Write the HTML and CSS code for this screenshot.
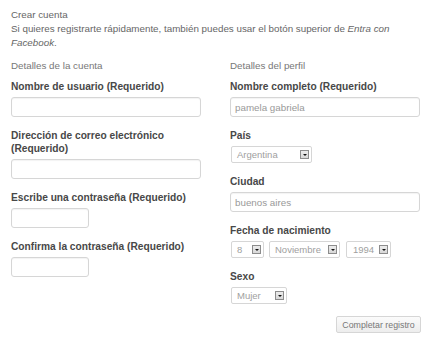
FILE: index.html
```html
<!DOCTYPE html>
<html lang="es">
<head>
<meta charset="utf-8"/>
<title>Crear cuenta</title>
<link rel="stylesheet" href="styles.css">
</head>
<body>
  <div class="intro">
    <p>Crear cuenta</p>
    <p>Si quieres registrarte rápidamente, también puedes usar el botón superior de <em>Entra con</em> <em>Facebook</em>.</p>
  </div>
  <form class="register">
    <div class="column">
      <h4>Detalles de la cuenta</h4>
      <div class="field">
        <label>Nombre de usuario (Requerido)</label>
        <input type="text" class="wide">
      </div>
      <div class="field">
        <label>Dirección de correo electrónico<br>(Requerido)</label>
        <input type="text" class="wide">
      </div>
      <div class="field">
        <label>Escribe una contraseña (Requerido)</label>
        <input type="password" class="short">
      </div>
      <div class="field">
        <label>Confirma la contraseña (Requerido)</label>
        <input type="password" class="short">
      </div>
    </div>
    <div class="column">
      <h4>Detalles del perfil</h4>
      <div class="field">
        <label>Nombre completo (Requerido)</label>
        <input type="text" class="wide" value="pamela gabriela">
      </div>
      <div class="field">
        <label>País</label>
        <div class="select country"><span>Argentina</span><i class="arrow"></i></div>
      </div>
      <div class="field">
        <label>Ciudad</label>
        <input type="text" class="wide" value="buenos aires">
      </div>
      <div class="field">
        <label>Fecha de nacimiento</label>
        <div class="date">
          <div class="select day"><span>8</span><i class="arrow"></i></div>
          <div class="select month"><span>Noviembre</span><i class="arrow"></i></div>
          <div class="select year"><span>1994</span><i class="arrow"></i></div>
        </div>
      </div>
      <div class="field">
        <label>Sexo</label>
        <div class="select sex"><span>Mujer</span><i class="arrow"></i></div>
      </div>
      <div class="actions">
        <button type="button">Completar registro</button>
      </div>
    </div>
  </form>
</body>
</html>
```

FILE: styles.css
```css
body {
  margin: 0;
  padding: 8px 11px 0;
  background: #fff;
  font-family: "Liberation Sans", Arial, sans-serif;
  font-size: 9.8px;
  line-height: 14px;
  color: #666;
}
.intro p {
  margin: 0;
}
.register {
  display: grid;
  grid-template-columns: 190px 190px;
  column-gap: 29px;
  margin-top: 9px;
}
h4 {
  margin: 0 0 7px;
  font-weight: normal;
  color: #777;
}
.field {
  margin-bottom: 12px;
}
label {
  display: block;
  font-size: 10.2px;
  font-weight: bold;
  color: #484848;
  line-height: 13px;
  margin-bottom: 4px;
}
input {
  display: block;
  box-sizing: border-box;
  height: 20px;
  margin: 0;
  padding: 0 4px;
  border: 1px solid #d6d6d6;
  border-radius: 3px;
  box-shadow: inset 0 1px 1px rgba(0,0,0,0.05);
  font-family: inherit;
  font-size: 9.8px;
  color: #999;
}
input.wide { width: 190px; }
input.short { width: 78px; }
.select {
  display: flex;
  align-items: center;
  justify-content: space-between;
  box-sizing: border-box;
  height: 17px;
  padding: 0 2px 0 5px;
  border: 1px solid #d6d6d6;
  border-radius: 2px;
  font-size: 9.5px;
  color: #a0a0a0;
  margin-left: 1px;
}
.arrow {
  position: relative;
  box-sizing: border-box;
  width: 9px;
  height: 9px;
  border: 1px solid #8c8c8c;
  background: linear-gradient(#ececec, #d8d8d8);
}
.arrow::after {
  content: "";
  position: absolute;
  left: 1.5px;
  top: 2.5px;
  border-left: 2px solid transparent;
  border-right: 2px solid transparent;
  border-top: 2px solid #111;
}
.country { width: 81px; }
.date {
  display: flex;
  gap: 5px;
}
.day { width: 33px; }
.month { width: 71px; margin-left: 0; }
.year { width: 45px; padding-left: 6px; margin-left: 1px; }
.sex { width: 56px; }
.actions {
  display: flex;
  justify-content: flex-end;
  margin-top: 5px;
}
button {
  height: 17px;
  width: 85px;
  margin-right: -1px;
  padding: 0;
  border: 1px solid #d6d6d6;
  border-radius: 2px;
  background: linear-gradient(#fbfbfb, #ededed);
  font-family: inherit;
  font-size: 8.8px;
  color: #777;
}
```
